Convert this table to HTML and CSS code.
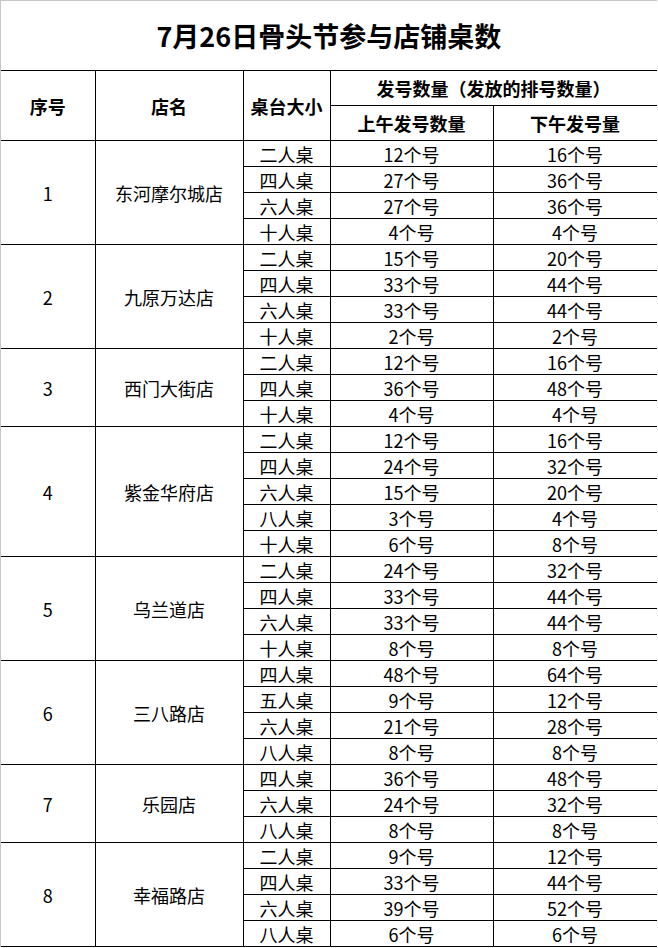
FILE: index.html
```html
<!DOCTYPE html>
<html lang="zh-CN">
<head>
<meta charset="utf-8">
<title>7月26日骨头节参与店铺桌数</title>
<link rel="stylesheet" href="styles.css">
</head>
<body>
<table class="sheet">
<colgroup>
<col class="c-no"><col class="c-name"><col class="c-size"><col class="c-am"><col class="c-pm">
</colgroup>
<thead>
<tr class="r-title"><th colspan="5" class="title">7月26日骨头节参与店铺桌数</th></tr>
<tr class="r-head"><th rowspan="2">序号</th><th rowspan="2">店名</th><th rowspan="2">桌台大小</th><th colspan="2">发号数量（发放的排号数量）</th></tr>
<tr class="r-head"><th>上午发号数量</th><th>下午发号量</th></tr>
</thead>
<tbody>
<tr><td rowspan="4">1</td><td rowspan="4">东河摩尔城店</td><td>二人桌</td><td>12个号</td><td>16个号</td></tr>
<tr><td>四人桌</td><td>27个号</td><td>36个号</td></tr>
<tr><td>六人桌</td><td>27个号</td><td>36个号</td></tr>
<tr><td>十人桌</td><td>4个号</td><td>4个号</td></tr>
<tr><td rowspan="4">2</td><td rowspan="4">九原万达店</td><td>二人桌</td><td>15个号</td><td>20个号</td></tr>
<tr><td>四人桌</td><td>33个号</td><td>44个号</td></tr>
<tr><td>六人桌</td><td>33个号</td><td>44个号</td></tr>
<tr><td>十人桌</td><td>2个号</td><td>2个号</td></tr>
<tr><td rowspan="3">3</td><td rowspan="3">西门大街店</td><td>二人桌</td><td>12个号</td><td>16个号</td></tr>
<tr><td>四人桌</td><td>36个号</td><td>48个号</td></tr>
<tr><td>十人桌</td><td>4个号</td><td>4个号</td></tr>
<tr><td rowspan="5">4</td><td rowspan="5">紫金华府店</td><td>二人桌</td><td>12个号</td><td>16个号</td></tr>
<tr><td>四人桌</td><td>24个号</td><td>32个号</td></tr>
<tr><td>六人桌</td><td>15个号</td><td>20个号</td></tr>
<tr><td>八人桌</td><td>3个号</td><td>4个号</td></tr>
<tr><td>十人桌</td><td>6个号</td><td>8个号</td></tr>
<tr><td rowspan="4">5</td><td rowspan="4">乌兰道店</td><td>二人桌</td><td>24个号</td><td>32个号</td></tr>
<tr><td>四人桌</td><td>33个号</td><td>44个号</td></tr>
<tr><td>六人桌</td><td>33个号</td><td>44个号</td></tr>
<tr><td>十人桌</td><td>8个号</td><td>8个号</td></tr>
<tr><td rowspan="4">6</td><td rowspan="4">三八路店</td><td>四人桌</td><td>48个号</td><td>64个号</td></tr>
<tr><td>五人桌</td><td>9个号</td><td>12个号</td></tr>
<tr><td>六人桌</td><td>21个号</td><td>28个号</td></tr>
<tr><td>八人桌</td><td>8个号</td><td>8个号</td></tr>
<tr><td rowspan="3">7</td><td rowspan="3">乐园店</td><td>四人桌</td><td>36个号</td><td>48个号</td></tr>
<tr><td>六人桌</td><td>24个号</td><td>32个号</td></tr>
<tr><td>八人桌</td><td>8个号</td><td>8个号</td></tr>
<tr><td rowspan="4">8</td><td rowspan="4">幸福路店</td><td>二人桌</td><td>9个号</td><td>12个号</td></tr>
<tr><td>四人桌</td><td>33个号</td><td>44个号</td></tr>
<tr><td>六人桌</td><td>39个号</td><td>52个号</td></tr>
<tr><td>八人桌</td><td>6个号</td><td>6个号</td></tr>
</tbody>
</table>
</body>
</html>
```

FILE: styles.css
```css
html, body {
  margin: 0;
  padding: 0;
  background: #ffffff;
}
body {
  font-family: "Noto Sans CJK SC", "Noto Sans", sans-serif;
  color: #000000;
  border-top: 1px solid #c6c6c6;
  border-left: 1px solid #c6c6c6;
  width: 657px;
  height: 947px;
  box-sizing: border-box;
}
.sheet {
  border-collapse: collapse;
  table-layout: fixed;
  width: 656px;
}
.c-no { width: 94px; }
.c-name { width: 148px; }
.c-size { width: 87px; }
.c-am { width: 163px; }
.c-pm { width: 164px; }
.sheet th, .sheet td {
  border: 1px solid #000000;
  padding: 0;
  text-align: center;
  vertical-align: middle;
  font-size: 18px;
  line-height: 20px;
  white-space: nowrap;
  overflow: hidden;
}
.sheet th {
  font-weight: bold;
}
.sheet tbody td {
  height: 25px;
  font-weight: normal;
}
.r-title th {
  border-top: none;
  border-left: none;
  height: 69px;
  font-size: 27px;
  line-height: 32px;
}
.r-head th {
  height: 34px;
}
.sheet tr > :first-child {
  border-left: none;
}
```
